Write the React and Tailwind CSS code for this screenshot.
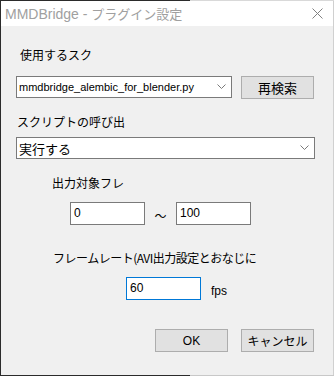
import React from "react";

const jp = { fontFamily: '"Noto Sans CJK JP", "Noto Sans", sans-serif' };
const lat = { fontFamily: '"Liberation Sans", "Noto Sans CJK JP", sans-serif' };

function Chevron() {
  return (
    <svg width="9" height="6" viewBox="0 0 9 6" className="shrink-0">
      <path d="M0.5 0.5 L4.5 4.5 L8.5 0.5" fill="none" stroke="#7a7a7a" strokeWidth="1" />
    </svg>
  );
}

export default function App() {
  return (
    <div className="w-[334px] h-[376px] flex flex-col bg-[#f0f0f0] overflow-hidden">
      <div className="flex h-px shrink-0">
        <div className="w-[190px] bg-[#2b2b2b]" />
        <div className="flex-1 bg-[#d9d9d9]" />
      </div>
      <div className="flex flex-1 min-h-0">
        <div className="w-px bg-[#2b2b2b] shrink-0" />
        <div className="flex-1 flex flex-col min-w-0">
          <div className="h-[25px] bg-white flex items-center justify-between pl-[4px] pr-[10px] shrink-0">
            <span className="text-[14px] leading-none text-[#a0a0a0] pt-[1px] whitespace-nowrap">
              <span style={lat}>MMDBridge - </span>
              <span className="text-[13px]" style={jp}>プラグイン設定</span>
            </span>
            <svg width="11" height="11" viewBox="0 0 11 11">
              <path d="M0.5 0.5 L10.5 10.5 M10.5 0.5 L0.5 10.5" stroke="#808080" strokeWidth="1" />
            </svg>
          </div>
          <div className="flex-1 flex flex-col text-black">
            <div className="mt-[21px] ml-[19px] h-[16px] text-[12px] leading-[16px]" style={jp}>
              使用するスク
            </div>
            <div className="mt-[13px] flex items-start">
              <div className="ml-[15px] w-[216px] h-[22px] bg-white border border-[#7a7a7a] flex items-center justify-between pl-[2px] pr-[5px]">
                <span className="text-[11px] leading-none" style={lat}>
                  mmdbridge_alembic_for_blender.py
                </span>
                <Chevron />
              </div>
              <div className="ml-[9px] w-[73px] h-[23px] bg-[#e1e1e1] border border-[#adadad] flex items-center justify-center text-[13px] leading-none" style={jp}>
                再検索
              </div>
            </div>
            <div className="mt-[15px] ml-[16px] h-[16px] text-[12px] leading-[16px]" style={jp}>
              スクリプトの呼び出
            </div>
            <div className="mt-[7px] ml-[15px] w-[299px] h-[22px] bg-white border border-[#7a7a7a] flex items-center justify-between pl-[2px] pr-[5px]">
              <span className="text-[13px] leading-none" style={jp}>実行する</span>
              <Chevron />
            </div>
            <div className="mt-[16px] ml-[51px] h-[16px] text-[12px] leading-[16px]" style={jp}>
              出力対象フレ
            </div>
            <div className="mt-[11px] flex items-center">
              <div className="ml-[69px] w-[75px] h-[23px] bg-white border border-[#7a7a7a] flex items-start pl-[3px] pt-[3px] text-[12px] leading-[14px]" style={lat}>
                0
              </div>
              <div className="w-[31px] flex justify-center pt-[4px] text-[12px] leading-none" style={jp}>～</div>
              <div className="w-[75px] h-[23px] bg-white border border-[#7a7a7a] flex items-start pl-[3px] pt-[3px] text-[12px] leading-[14px]" style={lat}>
                100
              </div>
            </div>
            <div className="mt-[25px] ml-[52px] h-[16px] text-[12px] leading-[16px] tracking-[-0.5px] whitespace-nowrap" style={jp}>
              フレームレート(AVI出力設定とおなじに
            </div>
            <div className="mt-[11px] flex items-center">
              <div className="ml-[125px] w-[75px] h-[23px] bg-white border border-[#0078d7] flex items-start pl-[3px] pt-[3px] text-[12px] leading-[14px]" style={lat}>
                60
              </div>
              <span className="ml-[10px] pt-[5px] text-[12px] leading-none" style={lat}>fps</span>
            </div>
            <div className="mt-[29px] flex items-center">
              <div className="ml-[154px] w-[73px] h-[23px] bg-[#e1e1e1] border border-[#adadad] flex items-center justify-center text-[12px] leading-none" style={lat}>
                OK
              </div>
              <div className="ml-[13px] w-[73px] h-[23px] bg-[#e1e1e1] border border-[#adadad] flex items-center justify-center text-[12px] leading-none" style={jp}>
                キャンセル
              </div>
            </div>
          </div>
        </div>
        <div className="w-px bg-[#d0d0d0] shrink-0" />
      </div>
      <div className="flex h-px shrink-0">
        <div className="w-[190px] bg-[#2b2b2b]" />
        <div className="flex-1 bg-[#c8c8c8]" />
      </div>
    </div>
  );
}
